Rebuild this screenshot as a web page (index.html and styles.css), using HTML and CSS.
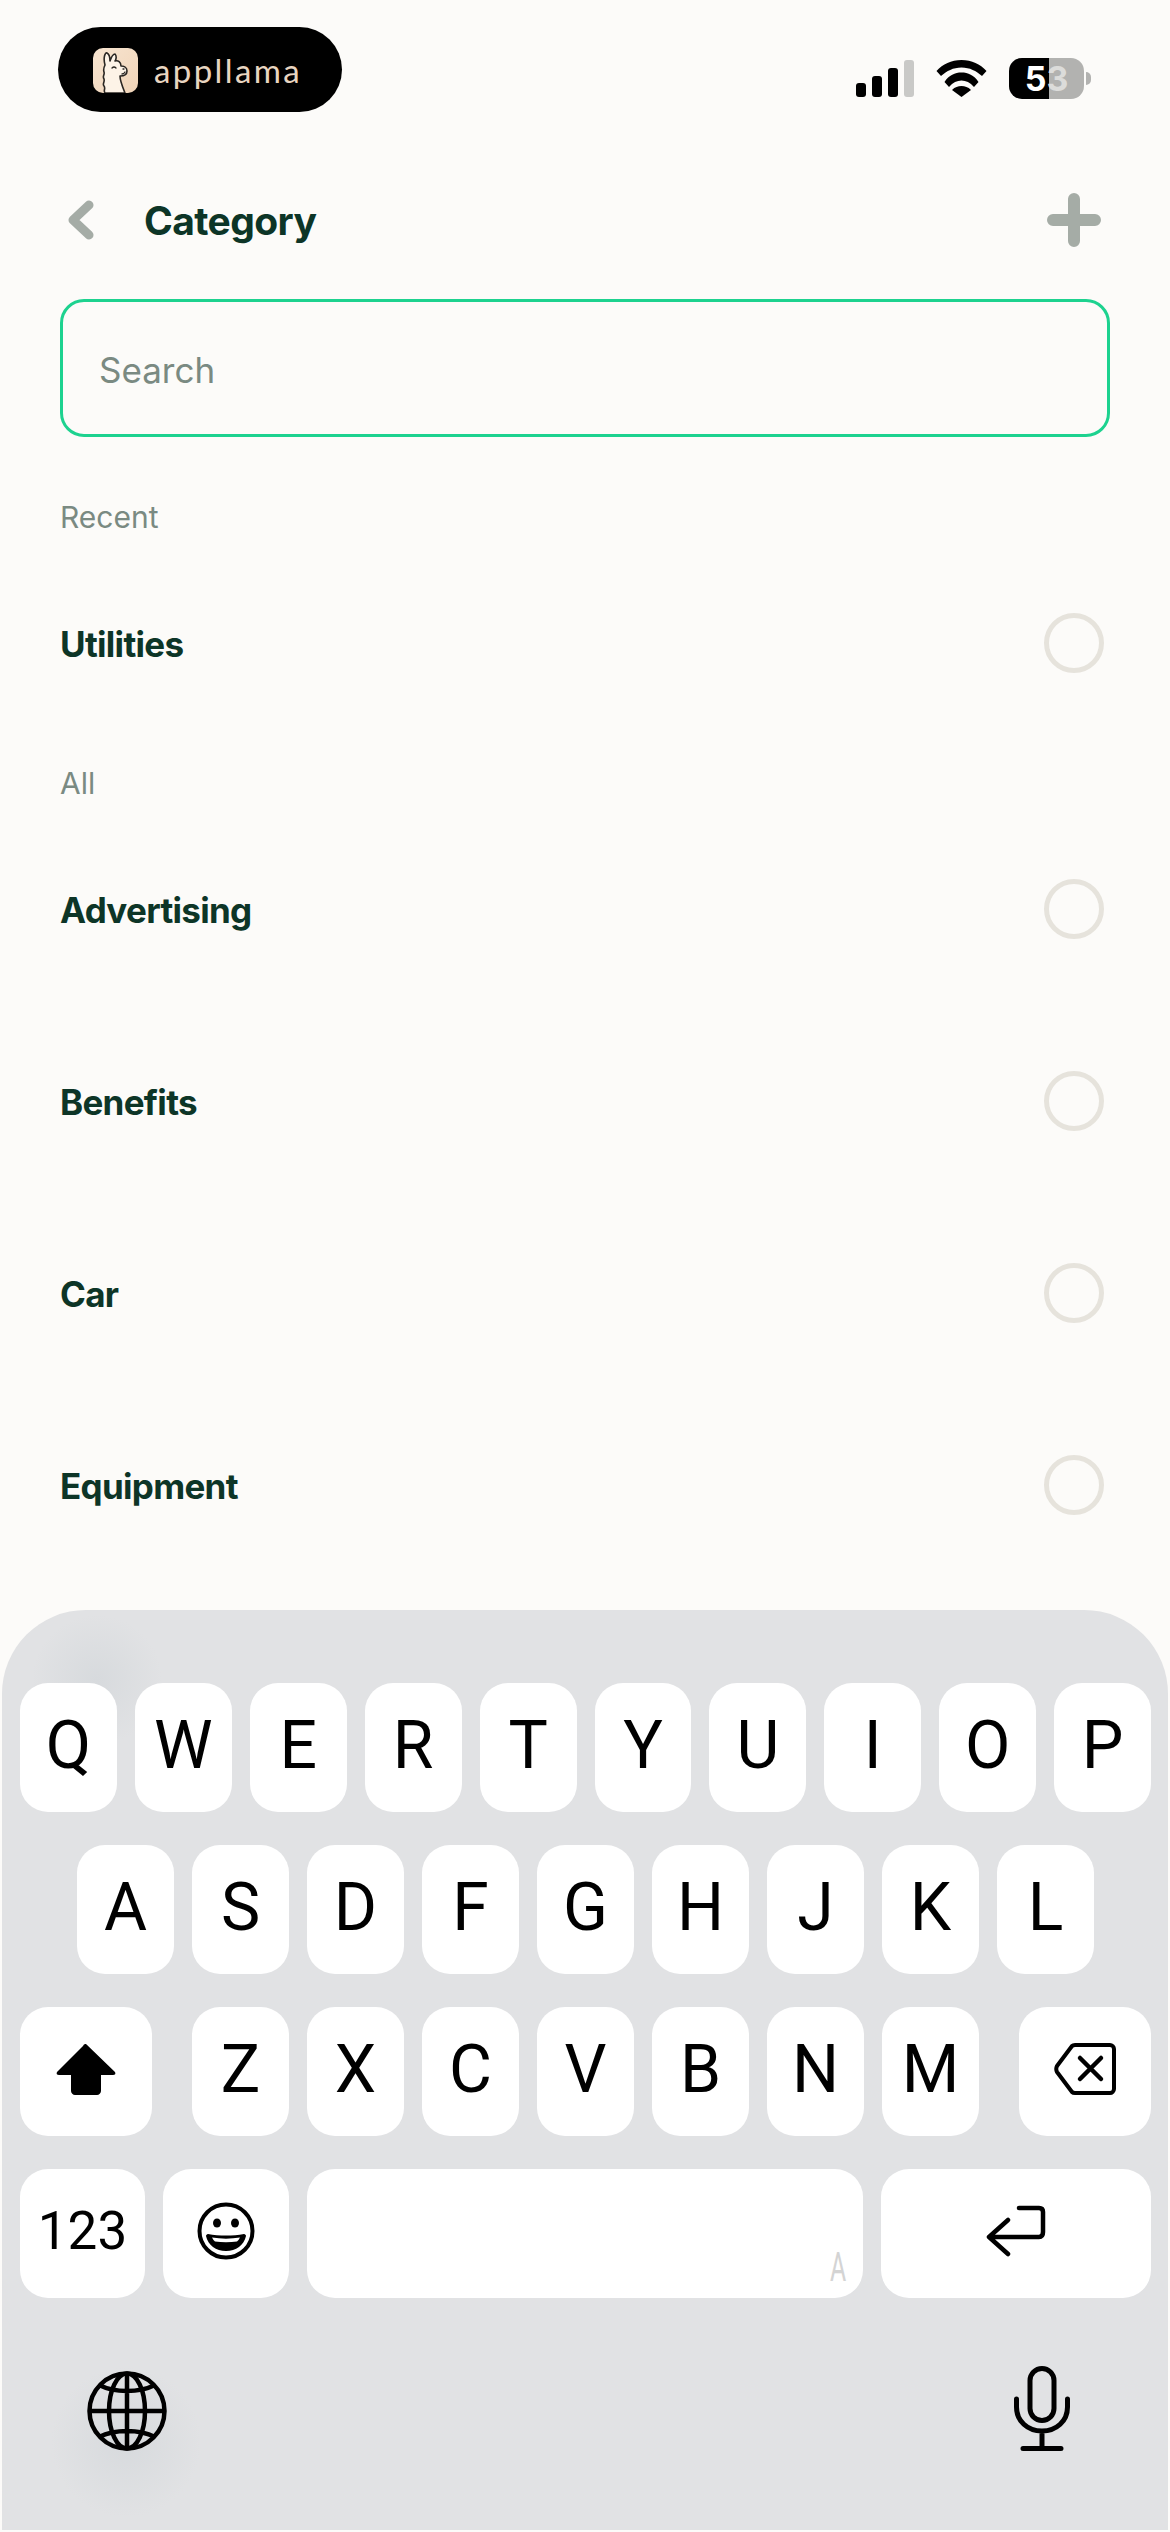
FILE: index.html
```html
<!DOCTYPE html>
<html lang="en">
  <head>
    <meta charset="UTF-8" />
    <meta name="viewport" content="width=device-width, initial-scale=1.0" />
    <title>Category</title>
    <link rel="stylesheet" href="styles.css">
  </head>
  <body>
    <div class="page">
      <div class="status-bar">
        <div class="brand">
          <svg class="brand-icon" width="45" height="45" viewBox="0 0 45 45">
            <defs>
              <linearGradient id="brand-bg" x1="0" y1="0" x2="1" y2="1">
                <stop offset="0" stop-color="#f7e4d0" />
                <stop offset="1" stop-color="#f0d4b8" />
              </linearGradient>
            </defs>
            <rect width="45" height="45" rx="10" fill="url(#brand-bg)" />
            <g transform="translate(3 0)">
              <path d="M9 45c-2-3 1-4-1-7-2-2 1-4 0-7-2-3 1-4 0-7-1-3 0-5 1-7C7 10 9 4 11 5c2 1 3 5 3 8 1-3 3-7 5-7 2 2 1 6 0 7 3-1 6 1 6 5 2 0 6 1 6 5s-3 5-7 5c0 5 3 12 5 17z" fill="#fdf3e7" stroke="#2a2622" stroke-width="1.600" stroke-linejoin="round" />
              <path d="M16 20q2-2 4 0M26 26q2 0 3-2M27 21h1" fill="none" stroke="#2a2622" stroke-width="1.300" stroke-linecap="round" />
            </g>
          </svg>
          <span class="brand-name">appllama</span>
        </div>
        <div class="status-icons">
          <svg width="58" height="37" viewBox="0 0 58 37">
            <rect x="0" y="23" width="10" height="14" rx="3" />
            <rect x="16" y="16" width="10" height="21" rx="3" />
            <rect x="32" y="8" width="10" height="29" rx="3" />
            <rect x="48" y="0" width="10" height="37" rx="3" fill="#c9c9c7" />
          </svg>
          <svg width="51" height="37" viewBox="0 0 51 37">
            <path d="M.5 11C7 4 15 0 25.500 0S44 4 50.500 11L46 16C40 11 34 7.500 25.500 7.500S11 11 5 16z" />
            <path d="M8.500 22C13 15 19 12.500 25.500 12.500S38 15 42.500 22L38 27C34 22.500 30 20.500 25.500 20.500S17 22.500 13 27z" />
            <path d="M16 30c3-3 6-4 9.500-4s6.500 1 9.500 4l-9.500 7z" />
          </svg>
          <div class="battery">
            <div class="battery-body"><span class="battery-on">5</span><span class="battery-off">3</span></div>
            <div class="battery-nub"></div>
          </div>
        </div>
      </div>

      <div class="nav">
        <svg class="nav-back" width="26" height="40" viewBox="0 0 26 40">
          <path d="M21 5L5 20l16 15" fill="none" stroke="#a5aca6" stroke-width="9" stroke-linecap="round" stroke-linejoin="round" />
        </svg>
        <h1 class="nav-title">Category</h1>
        <svg class="nav-add" width="54" height="54" viewBox="0 0 54 54">
          <path d="M27 6v42M6 27h42" fill="none" stroke="#a5aca6" stroke-width="12" stroke-linecap="round" />
        </svg>
      </div>

      <div class="search">Search</div>

      <div class="section-label section-recent">Recent</div>
      <div class="category-row"><span class="category-name">Utilities</span><span class="radio"></span></div>

      <div class="section-label section-all">All</div>
      <div class="category-row"><span class="category-name">Advertising</span><span class="radio"></span></div>
      <div class="category-row"><span class="category-name">Benefits</span><span class="radio"></span></div>
      <div class="category-row"><span class="category-name">Car</span><span class="radio"></span></div>
      <div class="category-row"><span class="category-name">Equipment</span><span class="radio"></span></div>

      <div class="keyboard">
        <div class="key-row">
          <div class="key">Q</div><div class="key">W</div><div class="key">E</div><div class="key">R</div><div class="key">T</div>
          <div class="key">Y</div><div class="key">U</div><div class="key">I</div><div class="key">O</div><div class="key">P</div>
        </div>
        <div class="key-row key-row-center">
          <div class="key">A</div><div class="key">S</div><div class="key">D</div><div class="key">F</div><div class="key">G</div>
          <div class="key">H</div><div class="key">J</div><div class="key">K</div><div class="key">L</div>
        </div>
        <div class="key-row key-row-split">
          <div class="key key-side">
            <svg width="60" height="52" viewBox="0 0 60 52">
              <path d="M30 1L59 29c1 2 0 3-2 3H45v16c0 2-2 4-4 4H19c-2 0-4-2-4-4V32H3c-2 0-3-1-2-3L27 3c1-2 2-2 3-2z" />
            </svg>
          </div>
          <div class="key-group">
            <div class="key">Z</div><div class="key">X</div><div class="key">C</div><div class="key">V</div>
            <div class="key">B</div><div class="key">N</div><div class="key">M</div>
          </div>
          <div class="key key-side">
            <svg width="62" height="52" viewBox="0 0 62 52">
              <path d="M21 2h35c2 0 4 2 4 4v40c0 2-2 4-4 4H21c-1 0-2 0-3-1L3 29c-1-2-1-4 0-6L18 3c1-1 2-1 3-1z" fill="none" stroke="#000" stroke-width="4" stroke-linejoin="round" />
              <path d="M26 15l21 21M47 15L26 36" fill="none" stroke="#000" stroke-width="4.500" stroke-linecap="round" />
            </svg>
          </div>
        </div>
        <div class="key-row">
          <div class="key key-numbers">123</div>
          <div class="key key-emoji">
            <svg width="58" height="58" viewBox="0 0 58 58">
              <circle cx="29" cy="29" r="26.500" fill="none" stroke="#000" stroke-width="4" />
              <ellipse cx="20" cy="21" rx="4" ry="4.500" />
              <ellipse cx="38" cy="21" rx="4" ry="4.500" />
              <path d="M11 32c11 2 25 2 36 0 1 0 2 1 2 2-2 9-10 15-20 15S11 43 9 34c0-1 1-2 2-2z" />
              <path d="M15 35.500c9 1.500 19 1.500 28 0-1 2-2 3-3 4-7 1-15 1-22 0-1-1-2-2-3-4z" fill="#fff" />
            </svg>
          </div>
          <div class="key key-space"><span class="space-hint">A</span></div>
          <div class="key key-return">
            <svg width="60" height="52" viewBox="0 0 60 52">
              <path d="M33 3h20c3 0 4 2 4 4v20c0 3-1 5-4 5H3M22 15L3 32l19 17" fill="none" stroke="#000" stroke-width="4.500" stroke-linecap="round" stroke-linejoin="round" />
            </svg>
          </div>
        </div>
        <div class="keyboard-bottom">
          <svg width="80" height="80" viewBox="0 0 80 80">
            <g fill="none" stroke="#000" stroke-width="4.500">
              <circle cx="40" cy="40" r="37.500" />
              <ellipse cx="40" cy="40" rx="18" ry="37.500" />
              <path d="M40 2v76M2 40h76M12 14c16 8 40 8 56 0M12 66c16-8 40-8 56 0" />
            </g>
          </svg>
          <svg class="mic" width="56" height="85" viewBox="0 0 56 85">
            <g fill="none" stroke="#000" stroke-width="5" stroke-linecap="round">
              <rect x="16" y="2.500" width="24" height="52" rx="12" />
              <path d="M2.500 33v8c0 14 11 24 25.500 24s25.500-10 25.500-24v-8M28 65v17M9 82.500h38" />
            </g>
          </svg>
        </div>
      </div>
    </div>
  </body>
</html>
```

FILE: styles.css
```css
body {
  margin: 0;
  padding: 0;
  font-family: Inter, "Liberation Sans", sans-serif;
  background-color: #fcfbf9;
  color: #0d3527;
}
.page {
  display: flex;
  flex-direction: column;
  height: 2532px;
  overflow: hidden;
}
.status-bar {
  display: flex;
  justify-content: space-between;
  align-items: flex-start;
  padding: 27px 79px 0 58px;
}
.brand {
  display: flex;
  align-items: center;
  gap: 16px;
  box-sizing: border-box;
  width: 284px;
  height: 85px;
  padding: 0 35px;
  border-radius: 43px;
  background: #000;
}
.brand-icon {
  flex: none;
  margin-top: 2px;
}
.brand-name {
  font-family: Lato, sans-serif;
  font-weight: 400;
  font-size: 33px;
  color: #e8d5c0;
  letter-spacing: 2.4px;
}
.status-icons {
  display: flex;
  align-items: center;
  gap: 22px;
  margin-top: 31px;
}
.battery {
  display: flex;
  align-items: center;
  gap: 2px;
}
.battery-body {
  display: flex;
  justify-content: center;
  align-items: center;
  width: 75px;
  height: 41px;
  border-radius: 13px;
  background: linear-gradient(90deg, #000 40px, #b2b2b0 40px);
  font-size: 34px;
  font-weight: 700;
  line-height: 41px;
}
.battery-on {
  color: #fff;
}
.battery-off {
  color: #dcdcda;
}
.battery-nub {
  width: 5px;
  height: 13px;
  border-radius: 0 7px 7px 0;
  background: #b2b2b0;
}
.nav {
  display: flex;
  align-items: center;
  height: 60px;
  margin-top: 78px;
  padding: 0 69px 0 68px;
}
.nav-title {
  flex: 1;
  margin: 0 0 0 50px;
  font-size: 39px;
  font-weight: 700;
  letter-spacing: -0.6px;
}
.search {
  display: flex;
  align-items: center;
  box-sizing: border-box;
  height: 138px;
  margin: 49px 60px 0;
  padding: 3px 0 0 36px;
  border: 3.5px solid #1dd28f;
  border-radius: 24px;
  font-size: 35px;
  color: #7a8a82;
}
.section-label {
  height: 40px;
  padding-left: 60px;
  font-size: 30px;
  line-height: 40px;
  color: #7a8a82;
}
.section-recent {
  margin: 60px 0 10px;
}
.section-all {
  margin: 24px 0 10px;
}
.category-row {
  display: flex;
  justify-content: space-between;
  align-items: center;
  height: 192px;
  padding: 0 66px 0 60px;
}
.category-name {
  padding-top: 2px;
  font-size: 35px;
  font-weight: 700;
  letter-spacing: -0.7px;
}
.radio {
  box-sizing: border-box;
  width: 60px;
  height: 60px;
  border: 5px solid #e6e3dc;
  border-radius: 50%;
}
.keyboard {
  flex: 1;
  display: flex;
  flex-direction: column;
  gap: 33px;
  margin: 29px 2px 2px;
  padding: 73px 17px 0 18px;
  border-radius: 84px 84px 0 0;
  background-color: #e1e2e4;
  background-image:
    radial-gradient(circle at 95px 70px, rgba(205, 210, 214, 0.5), rgba(225, 226, 228, 0) 65px),
    radial-gradient(circle at 124px 832px, rgba(205, 210, 214, 0.5), rgba(225, 226, 228, 0) 75px);
  font-family: Roboto, sans-serif;
}
.key-row {
  display: flex;
  gap: 18px;
  height: 129px;
}
.key-row-center {
  justify-content: center;
}
.key-row-split {
  justify-content: space-between;
}
.key-group {
  display: flex;
  gap: 18px;
}
.key {
  display: flex;
  justify-content: center;
  align-items: center;
  box-sizing: border-box;
  width: 97px;
  padding-bottom: 5px;
  border-radius: 28px;
  background: #fff;
  color: #000;
  font-size: 66px;
}
.key-side {
  width: 132px;
}
.key-numbers {
  width: 125px;
  font-size: 53px;
}
.key-emoji {
  width: 126px;
}
.key-space {
  position: relative;
  flex: 1;
}
.space-hint {
  position: absolute;
  right: 12px;
  bottom: 10px;
  font-size: 40px;
  line-height: 40px;
  color: #d4d4d4;
  transform: scaleX(0.62);
}
.key-return {
  width: 270px;
}
.keyboard-bottom {
  display: flex;
  justify-content: space-between;
  align-items: flex-end;
  margin-top: 35px;
  padding: 0 81px 0 67px;
}
```
